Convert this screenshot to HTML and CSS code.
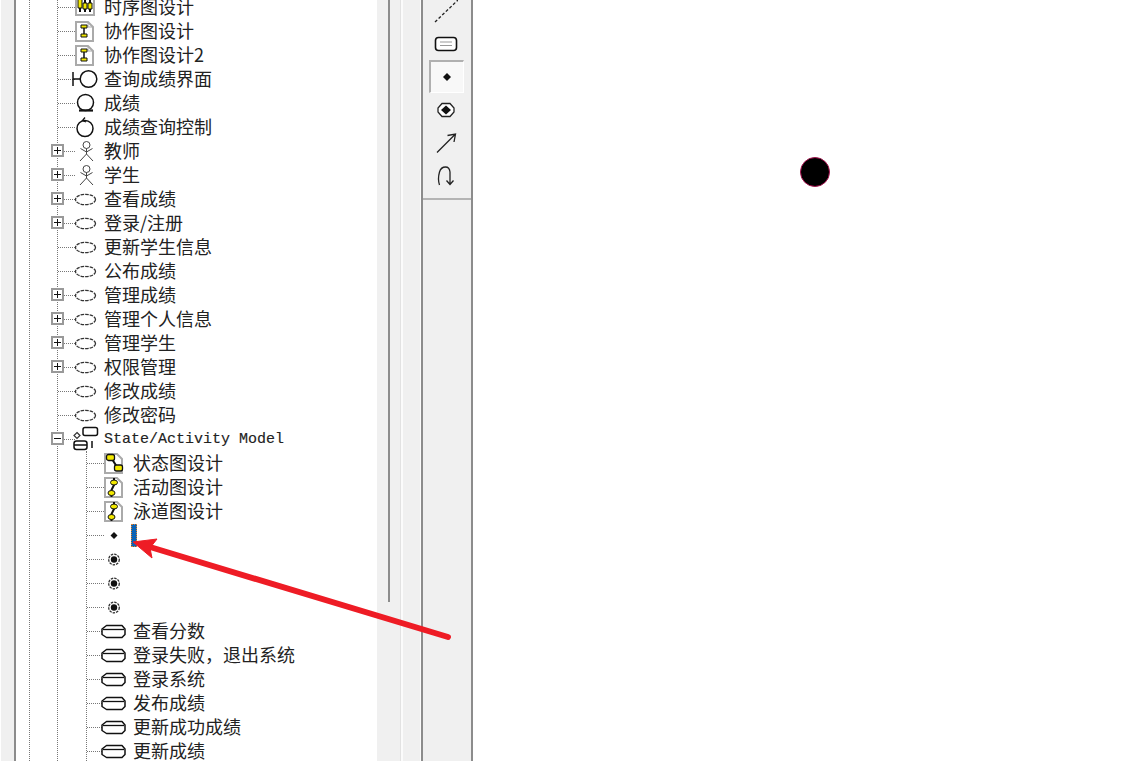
FILE: index.html
```html
<!DOCTYPE html>
<html lang="zh-CN">
<head>
    <meta charset="UTF-8">
    <meta name="viewport" content="width=device-width, initial-scale=1.0">
    <title>Rational Rose</title>
    <link rel="stylesheet" href="styles.css">
</head>
<body>
    <svg class="sprite" aria-hidden="true">
        <symbol id="doc-seq" viewBox="0 0 22 21">
            <path d="M1 -3H14L19 2V18H1Z" fill="#fff" stroke="#aaa" stroke-width="2"/>
            <path d="M5 -3V15M10 -3V15M15 -1V15" stroke="#111" stroke-width="2"/>
            <path d="M3 2h4v9h-4zM8 6h4v6h-4zM13 6h4v6h-4z" fill="#f2e800" stroke="#111"/>
        </symbol>
        <symbol id="doc-collab" viewBox="0 0 22 21">
            <path d="M1 1H13L18 6V20H1Z" fill="#fff" stroke="#aaa" stroke-width="2"/>
            <path d="M13 1V6H18" fill="none" stroke="#aaa"/>
            <path d="M9 6V14" stroke="#111" stroke-width="1.500"/>
            <path d="M6 4h6v3h-6zM6 13h6v3h-6z" fill="#f2e800" stroke="#111"/>
        </symbol>
        <symbol id="doc-state" viewBox="0 0 22 21">
            <path d="M1 1H13L18 6V20H1Z" fill="#fff" stroke="#aaa" stroke-width="2"/>
            <path d="M8 6L13 14" stroke="#111" stroke-width="2"/>
            <rect x="2.500" y="1.500" width="8" height="6" rx="2" fill="#f2e800" stroke="#111" stroke-width="1.300"/>
            <rect x="10.500" y="12" width="8" height="6" rx="2" fill="#f2e800" stroke="#111" stroke-width="1.300"/>
        </symbol>
        <symbol id="doc-activity" viewBox="0 0 22 21">
            <path d="M1 1H13L18 6V20H1Z" fill="#fff" stroke="#aaa" stroke-width="2"/>
            <path d="M10 1V8L7.500 13V20" fill="none" stroke="#111" stroke-width="2"/>
            <ellipse cx="10" cy="5.500" rx="3.500" ry="2.500" fill="#f2e800" stroke="#111"/>
            <ellipse cx="7.500" cy="16" rx="3.500" ry="2.500" fill="#f2e800" stroke="#111"/>
        </symbol>
        <symbol id="boundary" viewBox="0 0 22 21">
            <path d="M-2 3V17M-2 10H5" fill="none" stroke="#111" stroke-width="1.500"/>
            <circle cx="13.500" cy="10" r="8.300" fill="#fff" stroke="#111" stroke-width="1.500"/>
        </symbol>
        <symbol id="entity" viewBox="0 0 22 21">
            <circle cx="10.500" cy="9.500" r="8" fill="#fff" stroke="#111" stroke-width="1.500"/>
            <path d="M4 17.500H18" stroke="#111" stroke-width="2.200"/>
        </symbol>
        <symbol id="control" viewBox="0 0 22 21">
            <circle cx="10" cy="11.500" r="8" fill="#fff" stroke="#111" stroke-width="1.500"/>
            <path d="M10 .5L7.500 3.500L11 5" fill="none" stroke="#111" stroke-width="1.300"/>
        </symbol>
        <symbol id="actor" viewBox="0 0 22 21">
            <circle cx="11.500" cy="4" r="3.500" fill="#fff" stroke="#444"/>
            <path d="M5.500 7.500L11.500 11L17.500 7.500M11.500 7.500V13M5 20L11.500 13L18 20" fill="none" stroke="#444"/>
        </symbol>
        <symbol id="usecase" viewBox="0 0 22 21">
            <ellipse cx="10.500" cy="10.500" rx="10" ry="5.200" fill="#fff" stroke="#333" stroke-width="1.300" stroke-dasharray="3.500 1"/>
        </symbol>
        <symbol id="model" viewBox="0 0 22 21">
            <rect x="8" y="-1.500" width="14.500" height="8" rx="2" fill="#fff" stroke="#111" stroke-width="1.500"/>
            <path d="M2 3.500L5 6.500L2 9.500L-1 6.500Z" fill="#fff" stroke="#333" stroke-width="1.200"/>
            <rect x="-1" y="12" width="13" height="8.500" rx="2.500" fill="#fff" stroke="#111" stroke-width="1.500"/>
            <path d="M-1 16H12M17 12V19" stroke="#111" stroke-width="1.500"/>
        </symbol>
        <symbol id="start" viewBox="0 0 22 21">
            <path d="M10 7L13.500 10.500L10 14L6.500 10.500Z" fill="#111"/>
        </symbol>
        <symbol id="end" viewBox="0 0 22 21">
            <circle cx="10" cy="10.500" r="5.300" fill="#fff" stroke="#333" stroke-width="1.300" stroke-dasharray="2.500 1"/>
            <circle cx="10" cy="10.500" r="3.200" fill="#111"/>
        </symbol>
        <symbol id="action" viewBox="0 0 22 21">
            <path d="M2.500 4.500H18L21 8V13.500L18 16.500H2.500L-2 13.500V8Z" fill="#fff" stroke="#111" stroke-width="1.500" stroke-linejoin="round"/>
            <path d="M-1 8.500H20" stroke="#111" stroke-width="1.300"/>
        </symbol>
    </svg>

    <div class="window">
        <div class="edge"></div>

        <div class="browser">
            <ul class="tree-root">
                <li>
                    <ul class="level1">
                        <li class="row"><span class="stub"></span><svg class="icon"><use href="#doc-seq"/></svg><span class="label">时序图设计</span></li>
                        <li class="row"><span class="stub"></span><svg class="icon"><use href="#doc-collab"/></svg><span class="label">协作图设计</span></li>
                        <li class="row"><span class="stub"></span><svg class="icon"><use href="#doc-collab"/></svg><span class="label">协作图设计2</span></li>
                        <li class="row"><span class="stub"></span><svg class="icon"><use href="#boundary"/></svg><span class="label">查询成绩界面</span></li>
                        <li class="row"><span class="stub"></span><svg class="icon"><use href="#entity"/></svg><span class="label">成绩</span></li>
                        <li class="row"><span class="stub"></span><svg class="icon"><use href="#control"/></svg><span class="label">成绩查询控制</span></li>
                        <li class="row"><span class="expander plus"></span><span class="stub"></span><svg class="icon"><use href="#actor"/></svg><span class="label">教师</span></li>
                        <li class="row"><span class="expander plus"></span><span class="stub"></span><svg class="icon"><use href="#actor"/></svg><span class="label">学生</span></li>
                        <li class="row"><span class="expander plus"></span><span class="stub"></span><svg class="icon"><use href="#usecase"/></svg><span class="label">查看成绩</span></li>
                        <li class="row"><span class="expander plus"></span><span class="stub"></span><svg class="icon"><use href="#usecase"/></svg><span class="label">登录/注册</span></li>
                        <li class="row"><span class="stub"></span><svg class="icon"><use href="#usecase"/></svg><span class="label">更新学生信息</span></li>
                        <li class="row"><span class="stub"></span><svg class="icon"><use href="#usecase"/></svg><span class="label">公布成绩</span></li>
                        <li class="row"><span class="expander plus"></span><span class="stub"></span><svg class="icon"><use href="#usecase"/></svg><span class="label">管理成绩</span></li>
                        <li class="row"><span class="expander plus"></span><span class="stub"></span><svg class="icon"><use href="#usecase"/></svg><span class="label">管理个人信息</span></li>
                        <li class="row"><span class="expander plus"></span><span class="stub"></span><svg class="icon"><use href="#usecase"/></svg><span class="label">管理学生</span></li>
                        <li class="row"><span class="expander plus"></span><span class="stub"></span><svg class="icon"><use href="#usecase"/></svg><span class="label">权限管理</span></li>
                        <li class="row"><span class="stub"></span><svg class="icon"><use href="#usecase"/></svg><span class="label">修改成绩</span></li>
                        <li class="row"><span class="stub"></span><svg class="icon"><use href="#usecase"/></svg><span class="label">修改密码</span></li>
                        <li class="row"><span class="expander"></span><span class="stub"></span><svg class="icon"><use href="#model"/></svg><span class="label mono">State/Activity Model</span></li>
                        <li>
                            <ul class="level2">
                                <li class="row"><span class="stub"></span><svg class="icon"><use href="#doc-state"/></svg><span class="label">状态图设计</span></li>
                                <li class="row"><span class="stub"></span><svg class="icon"><use href="#doc-activity"/></svg><span class="label">活动图设计</span></li>
                                <li class="row"><span class="stub"></span><svg class="icon"><use href="#doc-activity"/></svg><span class="label">泳道图设计</span></li>
                                <li class="row"><span class="stub"></span><svg class="icon"><use href="#start"/></svg><span class="editing"></span></li>
                                <li class="row"><span class="stub"></span><svg class="icon"><use href="#end"/></svg></li>
                                <li class="row"><span class="stub"></span><svg class="icon"><use href="#end"/></svg></li>
                                <li class="row"><span class="stub"></span><svg class="icon"><use href="#end"/></svg></li>
                                <li class="row"><span class="stub"></span><svg class="icon"><use href="#action"/></svg><span class="label">查看分数</span></li>
                                <li class="row"><span class="stub"></span><svg class="icon"><use href="#action"/></svg><span class="label">登录失败&#xFF0C;退出系统</span></li>
                                <li class="row"><span class="stub"></span><svg class="icon"><use href="#action"/></svg><span class="label">登录系统</span></li>
                                <li class="row"><span class="stub"></span><svg class="icon"><use href="#action"/></svg><span class="label">发布成绩</span></li>
                                <li class="row"><span class="stub"></span><svg class="icon"><use href="#action"/></svg><span class="label">更新成功成绩</span></li>
                                <li class="row"><span class="stub"></span><svg class="icon"><use href="#action"/></svg><span class="label">更新成绩</span></li>
                            </ul>
                        </li>
                    </ul>
                </li>
            </ul>
        </div>

        <div class="scrollbar"><div class="thumb"></div></div>
        <div class="sash"></div>

        <div class="toolbar">
            <div class="tools">
                <div class="tool">
                    <svg width="24" height="24" viewBox="0 0 24 24"><path d="M1 23L24 1" stroke="#222" stroke-width="1.300" stroke-dasharray="3 2"/></svg>
                </div>
                <div class="tool">
                    <svg width="24" height="16" viewBox="0 0 24 16"><rect x="1.500" y="1.500" width="21" height="13" rx="3" fill="#fff" stroke="#111" stroke-width="1.600"/><path d="M6 6H18M6 9.500H18" stroke="#999"/></svg>
                </div>
                <div class="tool active">
                    <svg width="10" height="10" viewBox="0 0 10 10"><path d="M5 1L9 5L5 9L1 5Z" fill="#111"/></svg>
                </div>
                <div class="tool">
                    <svg width="18" height="16" viewBox="0 0 18 16"><path d="M5 1.500H13L17 6V10L13 14.500H5L1 10V6Z" fill="#fff" stroke="#222" stroke-width="1.300"/><path d="M9 3.500L14 8L9 12.500L4 8Z" fill="#111"/></svg>
                </div>
                <div class="tool">
                    <svg width="24" height="24" viewBox="0 0 24 24"><path d="M3 21.500L21 3.500M13.500 4.500L21.500 3L20 11" fill="none" stroke="#222" stroke-width="1.300"/></svg>
                </div>
                <div class="tool">
                    <svg width="20" height="24" viewBox="0 0 20 24"><path d="M3.500 21Q1.500 15 3.500 8Q5 3 9.500 3Q13.500 3 14 8V20M10.500 16.500L14 20.500L17.500 16.500" fill="none" stroke="#222" stroke-width="1.300"/></svg>
                </div>
            </div>
        </div>

        <div class="canvas">
            <div class="start-node"></div>
        </div>
    </div>

    <svg class="callout" width="1145" height="761" viewBox="0 0 1145 761">
        <path d="M448 637L150 547" stroke="#ee1c25" stroke-width="6" stroke-linecap="round"/>
        <path d="M133 542L157 539L150 548L152 558Z" fill="#ee1c25" stroke="#ee1c25"/>
    </svg>
</body>
</html>
```

FILE: styles.css
```css
body {
    margin: 0;
    height: 100vh;
    overflow: hidden;
    background: #fff;
    font-family: "Noto Sans CJK SC", "Liberation Sans", sans-serif;
    color: #222;
}
ul {
    list-style: none;
    margin: 0;
    padding: 0;
}
.sprite {
    display: none;
}
.window {
    display: flex;
    height: 100%;
}
.edge {
    width: 13px;
    margin-left: 1px;
    background: #f0f0f0;
    border-right: 2px solid #8c8c8c;
}
.browser {
    width: 361px;
    overflow: hidden;
}
.tree-root {
    margin-left: 13px;
    padding-left: 27px;
    border-left: 1px dotted #777;
}
.level1 {
    margin-top: -5px;
    border-left: 1px dotted #777;
}
.level2 {
    margin-left: 28px;
    border-left: 1px dotted #777;
}
.row {
    position: relative;
    display: flex;
    align-items: center;
    height: 24px;
}
.stub {
    flex: none;
    width: 17px;
    border-top: 1px dotted #777;
}
.icon {
    flex: none;
    width: 22px;
    height: 21px;
    overflow: visible;
}
symbol {
    overflow: visible;
}
.label {
    margin-left: 7px;
    padding-bottom: 2px;
    font-size: 18px;
    line-height: 24px;
    white-space: nowrap;
}
.mono {
    padding: 2px 0 0;
    font-family: "Liberation Mono", monospace;
    font-size: 15px;
    -webkit-text-stroke: 0.15px #222;
}
.editing {
    width: 4px;
    height: 21px;
    margin-left: 5px;
    background: #0b63b5;
    border: 1px dotted #e8832a;
}
.expander {
    position: absolute;
    left: -7px;
    top: 5px;
    box-sizing: border-box;
    width: 13px;
    height: 13px;
    background: linear-gradient(#111, #111) center / 7px 1px no-repeat, #fff;
    border: 2px solid #999;
}
.plus {
    background: linear-gradient(#111, #111) center / 7px 1px no-repeat, linear-gradient(#111, #111) center / 1px 7px no-repeat, #fff;
}
.scrollbar {
    width: 24px;
    background: #f0f0f0;
    border-right: 1px solid #e2e2e2;
    box-sizing: border-box;
}
.thumb {
    width: 2px;
    height: 602px;
    margin-left: 11px;
    background: #8c8c8c;
}
.sash {
    box-sizing: border-box;
    width: 20px;
    background: #f0f0f0;
    border-left: 2px solid #fbfbfb;
    border-right: 1px solid #fbfbfb;
}
.toolbar {
    box-sizing: border-box;
    width: 52px;
    background: #f0f0f0;
    border-left: 2px solid #8c8c8c;
    border-right: 2px solid #8c8c8c;
}
.tools {
    box-sizing: border-box;
    height: 200px;
    padding-right: 2px;
    border-bottom: 2px solid #b4b4b4;
    display: flex;
    flex-direction: column;
    align-items: center;
    overflow: hidden;
}
.tool {
    flex: none;
    width: 35px;
    height: 33px;
    display: flex;
    align-items: center;
    justify-content: center;
}
.tool:first-child {
    margin-top: -6px;
}
.active {
    box-sizing: border-box;
    background: #f8f8f8;
    border-top: 2px solid #b0b0b0;
    border-left: 2px solid #b0b0b0;
    border-right: 1px solid #fff;
    border-bottom: 1px solid #fff;
}
.canvas {
    position: relative;
    flex: 1;
    background: #fff;
}
.start-node {
    position: absolute;
    left: 327px;
    top: 157px;
    box-sizing: border-box;
    width: 30px;
    height: 30px;
    border-radius: 50%;
    background: #000;
    border: 1px solid #a8124f;
}
.callout {
    position: absolute;
    left: 0;
    top: 0;
}
```
